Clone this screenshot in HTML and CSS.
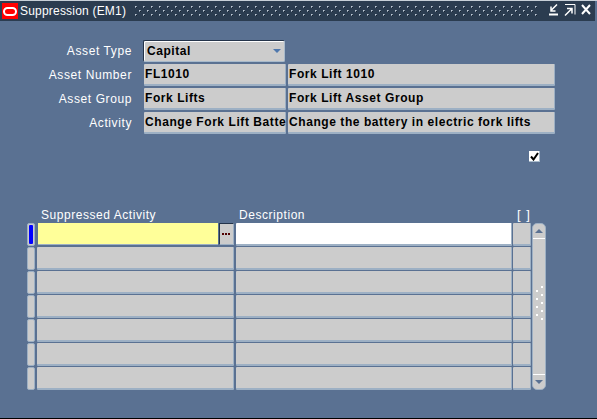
FILE: index.html
```html
<!DOCTYPE html>
<html lang="en">
  <head>
    <meta charset="UTF-8" />
    <title>Suppression (EM1)</title>
    <link rel="stylesheet" href="styles.css">
  </head>
  <body>
    <div class="window">
      <div class="titlebar">
        <div class="logo"><span class="logo-ring"></span></div>
        <div class="title">Suppression (EM1)</div>
        <svg class="grip" width="404" height="12">
          <defs>
            <pattern id="gripDots" width="8" height="8" patternUnits="userSpaceOnUse">
              <rect x="2" y="0" width="1" height="1" fill="#c4ccd6" />
              <rect x="3" y="0" width="1" height="1" fill="#8796a8" />
              <rect x="2" y="1" width="1" height="1" fill="#8796a8" />
              <rect x="3" y="1" width="1" height="1" fill="#16212e" />
              <rect x="6" y="4" width="1" height="1" fill="#c4ccd6" />
              <rect x="7" y="4" width="1" height="1" fill="#8796a8" />
              <rect x="6" y="5" width="1" height="1" fill="#8796a8" />
              <rect x="7" y="5" width="1" height="1" fill="#16212e" />
            </pattern>
          </defs>
          <rect width="404" height="12" fill="url(#gripDots)" />
        </svg>
        <svg class="win-icons" width="44" height="14" viewBox="0 0 44 14">
          <g fill="none" stroke="#fff">
            <path d="M0 10.500h9" stroke-width="2" />
            <path d="M8 0.500L2 6.500M2 2.500v4.500h4.500" stroke-width="1.500" />
            <path d="M16 0.500h10v10" stroke-width="1" />
            <path d="M16 11.500l6.500-6.500M18 4.500h5v5" stroke-width="1.500" />
            <path d="M33 1l8 9M41 1l-8 9" stroke-width="2" />
          </g>
        </svg>
      </div>

      <div class="form">
        <div class="form-row form-row-first">
          <label class="form-label">Asset Type</label>
          <div class="select">
            <span>Capital</span>
            <span class="select-arrow"></span>
          </div>
        </div>
        <div class="form-row">
          <label class="form-label">Asset Number</label>
          <div class="field field-code">FL1010</div>
          <div class="field field-desc">Fork Lift 1010</div>
        </div>
        <div class="form-row">
          <label class="form-label">Asset Group</label>
          <div class="field field-code">Fork Lifts</div>
          <div class="field field-desc">Fork Lift Asset Group</div>
        </div>
        <div class="form-row">
          <label class="form-label">Activity</label>
          <div class="field field-code">Change Fork Lift Batte</div>
          <div class="field field-desc">Change the battery in electric fork lifts</div>
        </div>
      </div>

      <div class="check-row">
        <div class="checkbox">
          <svg width="9" height="9" viewBox="0 0 9 9">
            <path d="M1 4.500l2.500 3L8 1" fill="none" stroke="#000" stroke-width="2" />
          </svg>
        </div>
      </div>

      <div class="block">
        <div class="block-head">
          <div class="head-activity">Suppressed Activity</div>
          <div class="head-desc">Description</div>
          <div class="head-more">[ ]</div>
        </div>
        <div class="block-body">
          <div class="rows">
            <div class="row row-current">
              <div class="indicator"><span class="indicator-on"></span></div>
              <div class="cell cell-activity cell-lov">
                <div class="cell-yellow"></div>
                <div class="lov-btn">
                  <svg width="9" height="3" viewBox="0 0 9 3"><path d="M0 0h2v2H0zM3 0h2v2H3zM6 0h2v2H6z" fill="#500000" /></svg>
                </div>
              </div>
              <div class="cell cell-desc cell-white"></div>
              <div class="cell cell-more"></div>
            </div>
            <div class="row"><div class="indicator"></div><div class="cell cell-activity"></div><div class="cell cell-desc"></div><div class="cell cell-more"></div></div>
            <div class="row"><div class="indicator"></div><div class="cell cell-activity"></div><div class="cell cell-desc"></div><div class="cell cell-more"></div></div>
            <div class="row"><div class="indicator"></div><div class="cell cell-activity"></div><div class="cell cell-desc"></div><div class="cell cell-more"></div></div>
            <div class="row"><div class="indicator"></div><div class="cell cell-activity"></div><div class="cell cell-desc"></div><div class="cell cell-more"></div></div>
            <div class="row"><div class="indicator"></div><div class="cell cell-activity"></div><div class="cell cell-desc"></div><div class="cell cell-more"></div></div>
            <div class="row"><div class="indicator"></div><div class="cell cell-activity"></div><div class="cell cell-desc"></div><div class="cell cell-more"></div></div>
          </div>
          <div class="scrollbar">
            <div class="scroll-btn scroll-up"><span class="arrow-up"></span></div>
            <div class="scroll-track">
              <svg width="10" height="36" viewBox="0 0 10 36">
                <g fill="#fff">
                  <path d="M6 0h2v2H6zM1 4h2v2H1zM6 8h2v2H6zM1 12h2v2H1zM6 16h2v2H6zM1 20h2v2H1zM6 24h2v2H6zM1 28h2v2H1zM6 32h2v2H6z" />
                </g>
              </svg>
            </div>
            <div class="scroll-btn scroll-down"><span class="arrow-down"></span></div>
          </div>
        </div>
      </div>
    </div>
  </body>
</html>
```

FILE: styles.css
```css
html,
body {
  margin: 0;
  padding: 0;
}
body {
  width: 597px;
  height: 419px;
  overflow: hidden;
  font-family: "Liberation Sans", Arial, sans-serif;
  font-size: 12px;
}
.window {
  width: 597px;
  height: 419px;
  box-sizing: border-box;
  background-color: #5a7192;
  border-top: 1px solid #c8d0d8;
  border-bottom: 1px solid #000;
  display: flex;
  flex-direction: column;
}

/* title bar */
.titlebar {
  height: 20px;
  margin-right: 2px;
  background-color: #2b3c50;
  display: flex;
  align-items: center;
  color: #fff;
}
.logo {
  width: 16px;
  height: 16px;
  margin-left: 2px;
  background-color: #f00;
  display: flex;
  align-items: center;
  justify-content: center;
}
.logo-ring {
  width: 10px;
  height: 5px;
  border: 2px solid #fff;
  border-radius: 5px;
}
.title {
  width: 113px;
  margin-left: 2px;
  font-size: 12px;
  letter-spacing: 0.2px;
  white-space: nowrap;
}
.grip {
  flex-shrink: 0;
  margin-top: 1px;
}
.win-icons {
  margin-left: 12px;
  flex-shrink: 0;
}

/* header form */
.form {
  padding-top: 18px;
}
.form-row {
  display: flex;
  align-items: center;
  height: 22px;
  margin-bottom: 2px;
}
.form-row-first {
  height: 23px;
}
.form-label {
  width: 132px;
  text-align: right;
  color: #fff;
  letter-spacing: 0.6px;
  margin-right: 12px;
}
.select {
  width: 142px;
  height: 22px;
  margin-left: -1px;
  box-sizing: border-box;
  background-color: #ccc;
  border: 1px solid #24344a;
  border-bottom-color: #a8bacb;
  border-right-color: #a8bacb;
  border-radius: 2px;
  box-shadow: inset 1px 1px 0 #fff;
  padding: 0 3px 0 3px;
  display: flex;
  align-items: center;
  justify-content: space-between;
  font-weight: bold;
  letter-spacing: 0.55px;
}
.select-arrow {
  width: 0;
  height: 0;
  border-left: 4px solid transparent;
  border-right: 4px solid transparent;
  border-top: 4px solid #4f78ad;
}
.field {
  height: 22px;
  box-sizing: border-box;
  background-color: #ccc;
  border-right: 1px solid #9db0c4;
  border-bottom: 2px solid #9db0c4;
  border-radius: 1px;
  padding-left: 1px;
  line-height: 21px;
  font-weight: bold;
  color: #000;
  letter-spacing: 0.57px;
  white-space: nowrap;
}
.field-code {
  width: 142px;
}
.field-desc {
  width: 267px;
  margin-left: 2px;
}

.check-row {
  height: 17px;
  margin-top: 15px;
  padding-left: 529px;
}
.checkbox {
  width: 10px;
  height: 10px;
  background-color: #fff;
  border-right: 1px solid #a8bacb;
  border-bottom: 1px solid #a8bacb;
  display: flex;
  align-items: center;
  justify-content: center;
}

/* multi row block */
.block {
  margin-top: 40px;
  padding-left: 27px;
}
.block-head {
  height: 15px;
  display: flex;
  color: #fff;
  letter-spacing: 0.55px;
  line-height: 14px;
}
.head-activity {
  width: 198px;
  margin-left: 14px;
}
.head-desc {
  width: 278px;
}
.head-more {
  font-size: 13px;
  word-spacing: 1px;
}
.block-body {
  display: flex;
}
.rows {
  width: 505px;
}
.row {
  height: 24px;
  display: flex;
}
.indicator {
  width: 8px;
  height: 23px;
  box-sizing: border-box;
  background-color: #ccc;
  border: 1px solid #9db0c4;
  border-radius: 2px;
  margin-right: 2px;
  display: flex;
  justify-content: center;
}
.indicator-on {
  width: 4px;
  margin-top: 1px;
  margin-bottom: 1px;
  background-color: #00f;
  border-radius: 1px;
}
.cell {
  height: 23px;
  box-sizing: border-box;
  background-color: #ccc;
  border-right: 1px solid #9db0c4;
  border-bottom: 2px solid #9db0c4;
  border-radius: 1px;
}
.cell-activity {
  width: 197px;
}
.cell-desc {
  width: 276px;
  margin-left: 2px;
}
.cell-more {
  width: 18px;
  margin-left: 1px;
}
.cell-lov {
  display: flex;
  background-color: transparent;
  border: 0;
}
.cell-yellow {
  width: 180px;
  height: 21px;
  margin-left: 1px;
  background-color: #ff9;
  border-bottom: 1px solid #9db0c4;
  box-sizing: content-box;
}
.lov-btn {
  width: 15px;
  height: 22px;
  margin-left: 1px;
  box-sizing: border-box;
  background-color: #ccc;
  border: 1px solid #24344a;
  border-bottom-color: #9db0c4;
  border-right-color: #9db0c4;
  display: flex;
  align-items: center;
  justify-content: center;
}
.cell-white {
  background-color: #fff;
}
.scrollbar {
  width: 14px;
  height: 167px;
  box-sizing: border-box;
  background-color: #ccc;
  border: 1px solid #9db0c4;
  border-radius: 5px;
  display: flex;
  flex-direction: column;
}
.scroll-btn {
  height: 14px;
  flex-shrink: 0;
  display: flex;
  align-items: center;
  justify-content: center;
}
.scroll-up {
  border-bottom: 1px solid #fff;
}
.scroll-down {
  border-top: 1px solid #fff;
}
.arrow-up {
  width: 0;
  height: 0;
  border-left: 4px solid transparent;
  border-right: 4px solid transparent;
  border-bottom: 4px solid #5a7192;
}
.arrow-down {
  width: 0;
  height: 0;
  border-left: 4px solid transparent;
  border-right: 4px solid transparent;
  border-top: 4px solid #5a7192;
}
.scroll-track {
  flex: 1;
  display: flex;
  justify-content: center;
  padding-top: 47px;
  padding-left: 1px;
}
```
